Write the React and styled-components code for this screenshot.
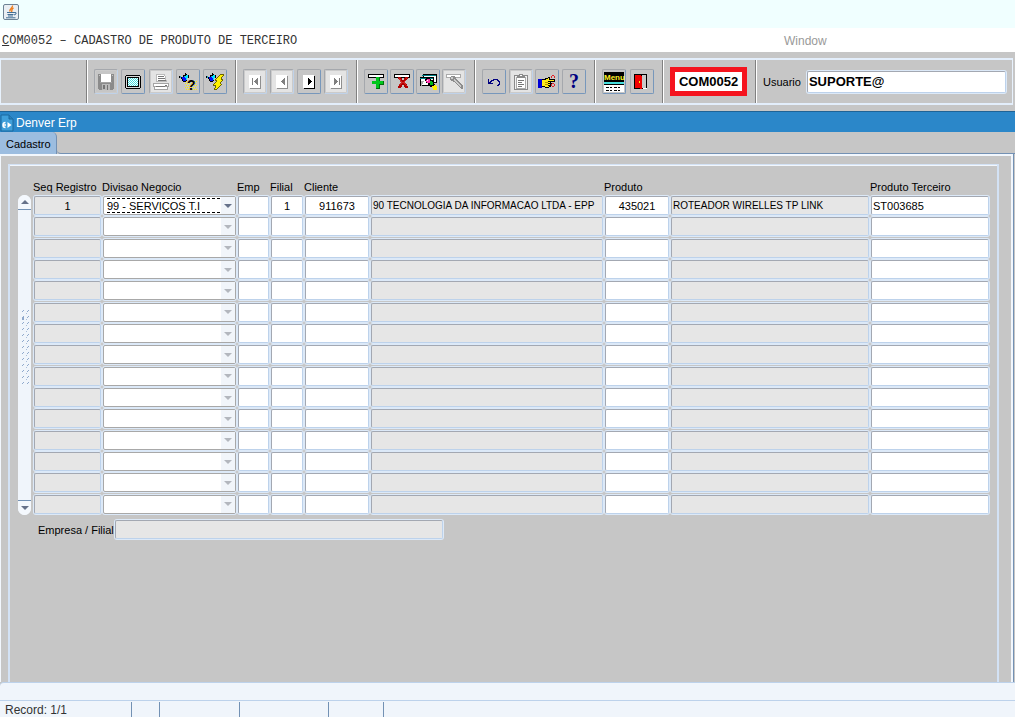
import React from 'react';
import styled, { createGlobalStyle, css } from 'styled-components';

const rows = [
  {
    seq: '1',
    divisao: '99 - SERVIÇOS T.I',
    emp: '',
    filial: '1',
    cliente: '911673',
    nome: '90 TECNOLOGIA DA INFORMACAO LTDA - EPP',
    produto: '435021',
    descricao: 'ROTEADOR WIRELLES TP LINK',
    terceiro: 'ST003685',
  },
  ...Array.from({ length: 14 }, () => ({})),
];

const columns = [
  { key: 'seq', label: 'Seq Registro', width: 69, center: true, readOnly: true },
  { key: 'divisao', label: 'Divisao Negocio', width: 135 },
  { key: 'emp', label: 'Emp', width: 33, center: true },
  { key: 'filial', label: 'Filial', width: 34, center: true },
  { key: 'cliente', label: 'Cliente', width: 66, center: true },
  { key: 'nome', name: 'Nome do cliente', readOnly: true, small: true },
  { key: 'produto', label: 'Produto', width: 66, center: true },
  { key: 'descricao', name: 'Descricao do produto', width: 200, readOnly: true, small: true },
  { key: 'terceiro', label: 'Produto Terceiro', width: 120 },
];

/* ---------- icons ---------- */

const Svg = ({ w = 18, h = 18, children }) => (
  <svg width={w} height={h} viewBox={`0 0 ${w} ${h}`} shapeRendering="crispEdges" aria-hidden="true">
    {children}
  </svg>
);

const JavaIcon = () => (
  <svg width="16" height="16" viewBox="0 0 16 16" aria-hidden="true">
    <rect x="0.5" y="0.5" width="15" height="15" rx="1.5" fill="#e9eef3" stroke="#6d8295" />
    <path d="M9.5 1.5C10 4 6 4.500 7 7.500M10.500 4C8 5 9.500 6 8.500 8" fill="none" stroke="#ee7d1c" strokeWidth="1.400" />
    <path d="M4 8.500h7M4.500 10.500h6M5 12h5M3 13.800h9.500" stroke="#426e95" strokeWidth="1" />
    <path d="M11 8.500q3-.500 2 1.500l-2 1" fill="none" stroke="#426e95" />
  </svg>
);

const FormIcon = () => (
  <svg width="13" height="16" viewBox="0 0 13 16" aria-hidden="true">
    <path d="M1 0h8l4 4v12H1z" fill="#3f9fda" stroke="#1b699f" />
    <path d="M9 0v4h4" fill="#2580bd" stroke="#1b699f" />
    <path d="M5.500 7.500A2.500 2.500 0 1 0 5.500 12.500M3 10h3" fill="none" stroke="#fff" strokeWidth="1.500" />
    <path d="M7.500 7l4 3-4 3z" fill="#fff" />
  </svg>
);

const SaveIcon = () => (
  <Svg>
    <path d="M1 1h16v15h-1v1H2v-1H1z" fill="#8b8b8b" />
    <path d="M4 1h10v8H4z" fill="#fff" />
    <path d="M2 2h1v1H2zM15 2h1v1h-1z" fill="#c6c6c6" />
    <path d="M5 11h8v6H5z" fill="#b9b9b9" />
    <path d="M6 12h2v4H6zM10 12h1v5h-1z" fill="#747474" />
    <path d="M3 9h12v1H3z" fill="#a2a2a2" />
  </Svg>
);

const ScreenIcon = () => (
  <Svg>
    <path d="M2 2h14v1h1v12h-1v1H2v-1H1V3h1z" fill="#000" />
    <path d="M2 3h14v12H2z" fill="#d9d9d9" />
    <path d="M3 4h12v10H3z" fill="#000" />
    <path d="M4 5h10v8H4z" fill="#fff" />
    <path d="M4 5.500h10M4 7.500h10M4 9.500h10M4 11.500h10" stroke="#4dd" strokeDasharray="1 1" />
    <path d="M5 6.500h9M5 8.500h9M5 10.500h9M5 12.500h9" stroke="#4dd" strokeDasharray="1 1" />
  </Svg>
);

const PrintIcon = () => (
  <Svg>
    <path d="M4.500 1.500h8l2 7h-10z" fill="#fff" stroke="#bbb" />
    <path d="M6 3.500h6M6 5.500h7M6 7.500h8" stroke="#777" />
    <path d="M1.500 10.500h15v3h-15zM2.500 13.500h13v3h-13z" fill="#fff" stroke="#a4a4a4" />
    <path d="M4 13.500h9" stroke="#777" />
    <path d="M13 12h2v1h-2z" fill="#777" />
  </Svg>
);

const Torch = () => (
  <>
    <path d="M6 0h1v1h1v1h2v3H8v3H7v1H4V8H3V6H2V5H0V3h2v1h2V2h2z" fill="#000" />
    <path d="M3 4h3v1h1v3H4V6H3z" fill="#0010ff" />
    <path d="M7 2h2v3H8v2H7V5H6V3h1z" fill="#00e5ff" />
    <path d="M1 3h1v2H1zM5 3h1v1H5z" fill="#2aa7c9" />
  </>
);

const EnterQueryIcon = () => (
  <Svg>
    <Torch />
    <path d="M7 8.500h11M6 10.500h12M7 12.500h11M6 14.500h12M7 16.500h11" stroke="#ffef00" strokeDasharray="1 1" />
    <text x="8" y="17" fontFamily="Liberation Sans, sans-serif" fontSize="14" fontWeight="700">?</text>
  </Svg>
);

const ExecuteQueryIcon = () => (
  <Svg>
    <Torch />
    <path d="M14 1h4v2h-1v1h-1v2h1v2h-1v1h-1v2h1v1h-1v1h-1v1h-1v1h-1v1h-1v1H8v-2h1v-2H7v-2h1v-1h1V9h1V8H9V6h1V5h1V4h1V3h1V2h1z" fill="#6b6600" />
    <path d="M14 2h3v1h-1v1h-1v3h1v1h-1v1h-1v2h1v1h-1v1h-1v1h-1v1h-1v1H9v-1h1v-3H8v-1h1v-1h1V9h1V7h-1V6h1V5h1V4h1V3h1z" fill="#fff200" />
  </Svg>
);

const arrows = {
  first: 'M4 5h1v7H4zM9 5h1v7H9V11H8v-1H7V9H6V8h1V7h1V6h1z',
  prev: 'M9 5h1v7H9V11H8v-1H7V9H6V8h1V7h1V6h1z',
  next: 'M6 5h1v1h1v1h1v1h1v1H9v1H8v1H7v1H6z',
  last: 'M5 5h1v1h1v1h1v1h1v1H8v1H7v1H6v1H5zM10 5h1v7h-1z',
};

const PageIcon = ({ dir, off }) => (
  <Svg w={14} h={17}>
    <path d="M2 3h11v13H2z" fill={off ? '#8f8f8f' : '#000'} />
    <path d="M1 2h11v13H1z" fill="#fff" />
    <path d={arrows[dir]} fill={off ? '#808080' : '#000'} />
  </Svg>
);

const InsertIcon = () => (
  <Svg>
    <path d="M1.500 1.500h15v3h-15z" fill="#fff" stroke="#000" />
    <path d="M9 4h3v4h4v3h-4v4H9v-4H5V8h4z" fill="#00c71c" />
    <path d="M12 4h1v4h-1zM16 8h1v4h-4v4H9v-1h3v-4h4z" fill="#006e0e" />
  </Svg>
);

const DeleteIcon = () => (
  <Svg>
    <path d="M1.500 1.500h15v3h-15z" fill="#fff" stroke="#000" />
    <path d="M5 4h3v1h1v2h2V5h1V4h3v2h-1v1h-1v1h-1v2h1v1h1v2h1v2h-3v-1h-1v-2H9v2H8v1H5v-2h1v-2h1v-1h1V8H7V7H6V6H5z" fill="#b00000" />
    <path d="M6 5h1v1h1v2h1v1h2V8h1V7h1V5h1v1h-1v2h-1v2h1v2h1v1h-1v-1h-1v-1h-1v-1H9v1H8v1H6v-1h1v-1h1V9H7V7H6z" fill="#cf2222" />
  </Svg>
);

const ClearIcon = () => (
  <Svg>
    <path d="M4.500 1.500h13v8h-13z" fill="#fff" stroke="#000" />
    <path d="M3 2h14v1H3z" fill="#008285" />
    <path d="M1.500 4.500h13v8h-13z" fill="#fff" stroke="#000" />
    <path d="M1 5h13v1H1z" fill="#008285" />
    <path d="M2 13V8h3v1H4v2H3v2z" fill="#aaa" />
    <path d="M7 5h4v1h1v1h2v2h1v2h1v2h-3v1h-2v-2H9v-2H7V8H6V6h1z" fill="#000" />
    <path d="M8 6h3v4H8V9H7V7h1z" fill="#ff2ea8" />
    <path d="M8 7h1v1H8z" fill="#fff" />
    <path d="M11 8h2v1h1v3h-3z" fill="#00b91b" />
    <path d="M13 13h2v-1h2v1h1v4h-4v-2h-1z" fill="#fff000" />
  </Svg>
);

const BrushIcon = () => (
  <Svg>
    <path d="M1.500 1.500h14v3h-14z" fill="#fff" stroke="#aaa" />
    <path d="M6 3h4v1h1v2h1v1h1v1h1v1h1v1h1v1h1v1h1v4h-2v-1h-1v-1h-1v-1h-1v-1h-1v-1h-1v-1h-1V9H8V8H6V7H5V4h1z" fill="#8d8d8d" />
    <path d="M6 4h2v2H6zM9 6h1v1h1v1h1v1h1v1h1v1h1v1h1v2h-1v-1h-1v-1h-1v-1h-1v-1h-1V9h-1V8H9z" fill="#ccc" />
  </Svg>
);

const UndoIcon = () => (
  <Svg>
    <path d="M3 6h1v3h1V8h1V7h2V6h5v1h1v1h1v4h-1v1h-2v-1h1v-1h1V9h-1V8h-1V7H9v1H7v1H6v1h2v1H3z" fill="#000080" />
  </Svg>
);

const ClipboardIcon = () => (
  <Svg>
    <path d="M2.500 2.500h13v14h-13z" fill="#f3f3f3" stroke="#8a8a8a" />
    <path d="M4.500 4.500h9v11h-9z" fill="#fff" stroke="#aaa" />
    <path d="M7 1h4v2h2v2H5V3h2z" fill="#8b8b8b" />
    <path d="M8 2h2v1H8z" fill="#fff" />
    <path d="M6 7.500h6M6 9.500h4M6 11.500h6M6 13.500h4" stroke="#777" />
  </Svg>
);

const ListIcon = () => (
  <Svg>
    <path d="M0 6h4v9H0z" fill="#0000d7" />
    <path d="M4 6h3V5h3V4h2v2h5v3h-4v1h1v2h-1v2h-2v1H7v-1H4z" fill="#000" />
    <path d="M4 7h4V6h2V5h1v2h5v1h-6v1h2v1h-2v1h2v1h-2v1h1v1H7v-1H4z" fill="#ffeb18" />
    <path d="M7 9.500h3M7 11.500h3" stroke="#b69400" />
    <path d="M14 2.500h2M13.500 3v2M16.500 3v2M14 10.500h2M13.500 11v2M16.500 11v2M14 13.500h2" stroke="#e1232a" />
  </Svg>
);

const HelpIcon = () => (
  <Svg w={20} h={23}>
    <text x="5" y="18" fontFamily="Liberation Serif, serif" fontSize="20" fontWeight="700" fill="#000080">?</text>
  </Svg>
);

const MenuIcon = () => (
  <Svg w={20} h={20}>
    <path d="M0 0h20v10H0z" fill="#000" />
    <text x="0" y="8" fontFamily="Liberation Sans, sans-serif" fontSize="8" fontWeight="700" fill="#ffef24">Menu</text>
    <path d="M0 10h20v2H0z" fill="#45dede" />
    <path d="M0 12h20v8H0z" fill="#fff" />
    <path d="M0 12.500h20" stroke="#000" />
    <path d="M2 15.500h16M2 18.500h16" stroke="#000" strokeDasharray="3 1 2 2" />
  </Svg>
);

const DoorIcon = () => (
  <Svg>
    <path d="M1 1h13v15H1z" fill="#000" />
    <path d="M9 2h4v13H9z" fill="#c9c9c9" />
    <path d="M2 2h6v1h1v13H7v-1H2z" fill="#f00000" />
    <path d="M6 8h1v2H6z" fill="#ffef00" />
    <path d="M10 15h4v1h-4z" fill="#fff" />
  </Svg>
);

const toolGroups = [
  {
    width: 149,
    tools: [
      { name: 'Salvar', icon: <SaveIcon />, off: true, flat: true },
      { name: 'Tela', icon: <ScreenIcon /> },
      { name: 'Imprimir', icon: <PrintIcon />, off: true },
      { name: 'Entrar consulta', icon: <EnterQueryIcon /> },
      { name: 'Executar consulta', icon: <ExecuteQueryIcon /> },
    ],
  },
  {
    width: 121,
    tools: [
      { name: 'Primeiro registro', icon: <PageIcon dir="first" off />, off: true },
      { name: 'Registro anterior', icon: <PageIcon dir="prev" off />, off: true },
      { name: 'Proximo registro', icon: <PageIcon dir="next" /> },
      { name: 'Ultimo registro', icon: <PageIcon dir="last" off />, off: true },
    ],
  },
  {
    width: 118,
    tools: [
      { name: 'Inserir registro', icon: <InsertIcon /> },
      { name: 'Excluir registro', icon: <DeleteIcon /> },
      { name: 'Limpar registro', icon: <ClearIcon /> },
      { name: 'Limpar campo', icon: <BrushIcon />, off: true },
    ],
  },
  {
    width: 120,
    tools: [
      { name: 'Desfazer', icon: <UndoIcon /> },
      { name: 'Colar', icon: <ClipboardIcon />, off: true },
      { name: 'Lista de valores', icon: <ListIcon /> },
      { name: 'Ajuda', icon: <HelpIcon /> },
    ],
  },
  {
    width: 68,
    tools: [
      { name: 'Menu', icon: <MenuIcon /> },
      { name: 'Sair', icon: <DoorIcon /> },
    ],
  },
];

const App = () => {
  return (
    <Page>
      <GlobalStyle />
      <TitleBar>
        <JavaIcon />
      </TitleBar>
      <MenuBar>
        <FormTitle><u>C</u>OM0052 – CADASTRO DE PRODUTO DE TERCEIRO</FormTitle>
        <WindowMenu type="button">Window</WindowMenu>
      </MenuBar>

      <ToolbarArea>
        <Toolbar>
          <Section $width={86} />
          {toolGroups.map((group) => (
            <Section key={group.width} $width={group.width}>
              <Tools>
                {group.tools.map((tool) => (
                  <Tool key={tool.name} type="button" aria-label={tool.name} disabled={tool.off} $flat={tool.flat}>
                    {tool.icon}
                  </Tool>
                ))}
              </Tools>
            </Section>
          ))}
          <Section $width={93}>
            <FormCode>COM0052</FormCode>
          </Section>
          <UserSection>
            <label htmlFor="usuario">Usuario</label>
            <UserInput id="usuario" defaultValue="SUPORTE@" />
          </UserSection>
        </Toolbar>
      </ToolbarArea>

      <FormHeader>
        <FormIcon />
        Denver Erp
      </FormHeader>
      <TabBar>
        <Tab type="button">Cadastro</Tab>
        <TabLine />
      </TabBar>

      <TabPanel>
        <Canvas>
          <Block>
            <ScrollBar>
              <ScrollButton type="button" aria-label="Subir">
                <svg width="8" height="4" viewBox="0 0 8 4" aria-hidden="true"><path d="M0 4l4-4 4 4z" fill="#66728a" /></svg>
              </ScrollButton>
              <Grip />
              <ScrollButton type="button" aria-label="Descer" $down>
                <svg width="8" height="4" viewBox="0 0 8 4" aria-hidden="true"><path d="M0 0l4 4 4-4z" fill="#66728a" /></svg>
              </ScrollButton>
            </ScrollBar>
            <Table>
              <colgroup>
                {columns.map((col) => <Col key={col.key} $width={col.width} />)}
              </colgroup>
              <thead>
                <tr>
                  {columns.map((col) => <Th key={col.key} scope="col">{col.label}</Th>)}
                </tr>
              </thead>
              <tbody>
                {rows.map((row, i) => (
                  <tr key={i}>
                    {columns.map((col) => (
                      <Td key={col.key}>
                        {col.key === 'divisao' ? (
                          <Combo>
                            <Select aria-label={`${col.label} ${i + 1}`} $active={i === 0}>
                              <option>{row.divisao}</option>
                            </Select>
                            <ComboArrow>
                              <svg width="8" height="4" viewBox="0 0 8 4" aria-hidden="true">
                                <path d="M0 0h8L4 4z" fill={i === 0 ? '#66728a' : '#b3b7be'} />
                              </svg>
                            </ComboArrow>
                          </Combo>
                        ) : (
                          <Field
                            aria-label={`${col.label || col.name} ${i + 1}`}
                            defaultValue={row[col.key] || ''}
                            readOnly={col.readOnly}
                            $center={col.center}
                            $small={col.small}
                          />
                        )}
                      </Td>
                    ))}
                  </tr>
                ))}
              </tbody>
            </Table>
          </Block>
          <Company>
            <label htmlFor="empresa">Empresa / Filial</label>
            <CompanyField id="empresa" readOnly />
          </Company>
        </Canvas>
      </TabPanel>

      <Message />
      <StatusBar>
        <StatusItem $width={128}>Record: 1/1</StatusItem>
        <StatusItem $width={28} />
        <StatusItem $width={80} />
        <StatusItem $width={89} />
        <StatusItem $width={55} />
      </StatusBar>
    </Page>
  );
};

const GlobalStyle = createGlobalStyle`
  * {
    box-sizing: border-box;
  }
  body {
    margin: 0;
    background: #c6c6c6;
    color: #000;
    font-family: "Liberation Sans", Arial, sans-serif;
    font-size: 11px;
  }
  button, input, select {
    margin: 0;
    font: inherit;
    color: inherit;
  }
  svg {
    display: block;
    flex: none;
    overflow: visible;
  }
`;

const Page = styled.div`
  display: flex;
  flex-direction: column;
  min-height: 100vh;
`;

const TitleBar = styled.header`
  height: 28px;
  padding: 4px 3px;
  background: #f0ffff;
`;

const MenuBar = styled.div`
  display: grid;
  grid-template-columns: 784fr 231fr;
  align-items: center;
  height: 24px;
  background: #fff;
`;

const FormTitle = styled.span`
  padding: 2px 0 0 2px;
  color: #333;
  font-family: "Liberation Mono", "Courier New", monospace;
  font-size: 12px;
  white-space: nowrap;
`;

const WindowMenu = styled.button`
  justify-self: start;
  padding: 2px 0 0;
  border: 0;
  background: none;
  color: #999;
  font-size: 12px;
`;

const ToolbarArea = styled.div`
  padding: 6px 2px 6px 0;
`;

const Toolbar = styled.div`
  display: flex;
  height: 47px;
  border: 1px solid #e8f2fd;
  border-top: 2px solid #e3eefb;
  border-bottom: 2px solid #e3eefb;
`;

const Section = styled.div`
  display: flex;
  flex: none;
  align-items: center;
  width: ${(props) => props.$width}px;
  padding: 0 8px 0 6px;
  border-right: 1px solid #808080;
  border-left: 1px solid #fff;

  &:first-child {
    border-left: 0;
  }
`;

const UserSection = styled.div`
  display: flex;
  flex: 1;
  align-items: center;
  gap: 6px;
  padding: 0 6px;
  border-left: 1px solid #fff;
`;

const Tools = styled.div`
  display: flex;
  flex: 1;
  justify-content: space-between;
`;

const Tool = styled.button`
  display: flex;
  align-items: center;
  justify-content: center;
  width: 24px;
  height: 25px;
  padding: 0;
  border: 1px solid #a5a8ad;
  border-right-color: #7797bb;
  border-bottom-color: #7797bb;
  border-radius: 2px;
  background: #c6c6c6;

  &:disabled {
    border-right-color: #bfd2ea;
    border-bottom-color: #bfd2ea;
    background: ${(props) => (props.$flat ? '#c6c6c6' : '#e4e4e4')};
    box-shadow: inset 0 0 0 1px #cbcbcb;
  }
`;

const FormCode = styled.output`
  display: flex;
  flex: none;
  align-items: center;
  justify-content: center;
  width: 77px;
  height: 29px;
  border: 5px solid #f5141e;
  background: #fff;
  font-size: 13px;
  font-weight: 700;
`;

const bevel = css`
  border: 1px solid #a3a8b2;
  border-right-color: #bdd2eb;
  border-bottom-color: #bdd2eb;
  border-radius: 2px;
  box-shadow: 0 0 0 1px #dce9f8;
  outline: 0;
`;

const UserInput = styled.input`
  ${bevel}
  flex: 1;
  min-width: 0;
  height: 22px;
  padding: 0 1px;
  background: #fff;
  font-size: 13px;
  font-weight: 700;
`;

const FormHeader = styled.div`
  display: flex;
  align-items: center;
  gap: 3px;
  height: 21px;
  padding-top: 2px;
  border-top: 1px solid #1f6396;
  background: #2b87c9;
  color: #fff;
  font-size: 12px;
`;

const TabBar = styled.div`
  display: flex;
  height: 22px;
`;

const Tab = styled.button`
  width: 57px;
  padding: 2px 0 0 6px;
  border: 0;
  border-right: 1px solid #7391b4;
  border-radius: 0 5px 0 0;
  background: #9cbde0;
  text-align: left;
`;

const TabLine = styled.div`
  flex: 1;
  border-bottom: 1px solid #7391b4;
  border-radius: 0 0 0 4px;
`;

const TabPanel = styled.main`
  display: flex;
  flex: 1;
  flex-direction: column;
  margin-right: 2px;
  padding: 8px 12px 0 7px;
  border: solid #f2f7fd;
  border-width: 2px 2px 0 1px;
  box-shadow: 1px 0 0 #7391b4;
`;

const Canvas = styled.div`
  flex: 1;
  padding: 14px 7px 0 8px;
  border: 1px solid #d3e2f5;
  border-width: 1px 2px 0 2px;
  border-bottom: 0;
  box-shadow: inset 0 1px 0 #f2f7fd;
`;

const Block = styled.div`
  display: flex;
  align-items: flex-end;
  gap: 2px;
`;

const ScrollBar = styled.div`
  display: flex;
  flex: none;
  flex-direction: column;
  width: 13px;
  height: 320px;
  border-radius: 7px;
  background: #f0f5fb;
  overflow: hidden;
`;

const ScrollButton = styled.button`
  display: flex;
  align-items: center;
  justify-content: center;
  height: 15px;
  padding: 0;
  border: 0;
  border-bottom: ${(props) => (props.$down ? 0 : '1px solid #7391b4')};
  border-top: ${(props) => (props.$down ? '1px solid #7391b4' : 0)};
  background: #f4f8fd;
`;

const Grip = styled.div`
  flex: 1;
  margin: 100px 2px 115px 4px;
  background:
    linear-gradient(135deg, transparent 50%, #8fa9cc 50%) 0 4px / 2px 6px no-repeat,
    conic-gradient(from 0deg at 1px 1px, transparent 75%, #8fa9cc 0) 1px 0 / 5px 6px,
    conic-gradient(from 0deg at 1px 1px, transparent 75%, #8fa9cc 0) 0 1px / 5px 6px,
    conic-gradient(from 0deg at 1px 1px, transparent 75%, #a9bedb 0) 4px 3px / 5px 6px;
`;

const Table = styled.table`
  flex: 1;
  table-layout: fixed;
  width: 100%;
  height: 336px;
  border-collapse: collapse;
`;

const Col = styled.col`
  width: ${(props) => (props.$width ? `${props.$width}px` : 'auto')};
`;

const Th = styled.th`
  height: 16px;
  padding: 1px 0 0;
  font-weight: 400;
  line-height: 15px;
  text-align: left;
  white-space: nowrap;
`;

const Td = styled.td`
  height: 21px;
  padding: 1px;
`;

const Field = styled.input`
  ${bevel}
  display: block;
  width: 100%;
  height: 19px;
  padding: 0 1px;
  background: ${(props) => (props.readOnly ? '#e6e6e6' : '#fff')};
  font-size: ${(props) => (props.$small ? 10 : 11)}px;
  text-align: ${(props) => (props.$center ? 'center' : 'left')};
`;

const Combo = styled.div`
  ${bevel}
  display: flex;
  height: 19px;
  border-color: #a8a8a8;
  background: #fff;
`;

const Select = styled.select`
  flex: 1;
  min-width: 0;
  margin: 1px 1px 1px 3px;
  padding: 0;
  appearance: none;
  border: 0;
  border-top: 1px dashed ${(props) => (props.$active ? '#000' : 'transparent')};
  border-bottom: 1px dashed ${(props) => (props.$active ? '#000' : 'transparent')};
  background: transparent;
  outline: 0;
`;

const ComboArrow = styled.span`
  display: flex;
  align-items: center;
  justify-content: center;
  width: 14px;
  background: #f1f5fa;
`;

const Company = styled.div`
  display: flex;
  align-items: center;
  gap: 1px;
  padding: 5px 0 0 20px;
`;

const CompanyField = styled(Field)`
  width: 328px;
`;

const Message = styled.div`
  height: 18px;
  border-top: 1px solid #bdd2eb;
  border-radius: 4px 0 0 0;
  background: #f0f5fb;
`;

const StatusBar = styled.footer`
  display: flex;
  height: 17px;
  padding: 1px 0 0 4px;
  border-top: 1px solid #bdd2eb;
  background: #f0f5fb;
  color: #333;
  font-size: 12px;
  line-height: 16px;
`;

const StatusItem = styled.span`
  width: ${(props) => props.$width}px;
  padding-left: 1px;
  border-right: 1px solid #7391b4;
`;

export default App;
